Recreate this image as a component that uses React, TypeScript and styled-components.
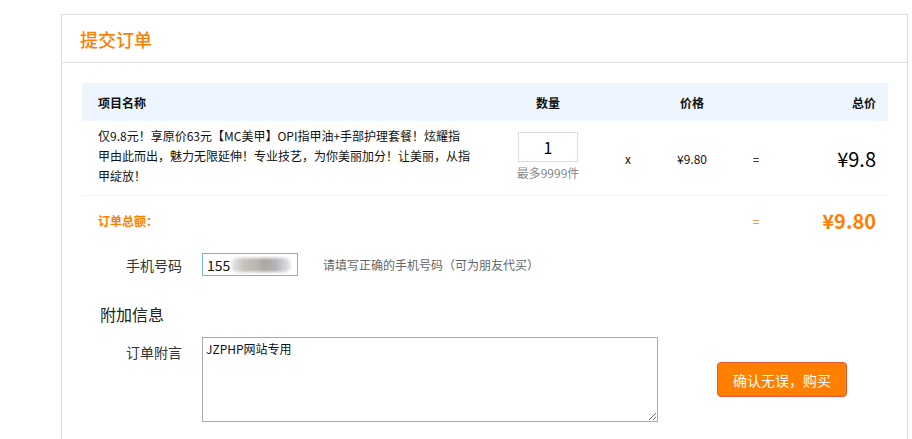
import React from "react";
import styled, { createGlobalStyle } from "styled-components";

const Global = createGlobalStyle`
  html, body { margin: 0; padding: 0; background: #fff; }
  body { font-family: "Microsoft YaHei", "Noto Sans CJK SC", "Noto Sans", sans-serif; color: #333; }
  * { box-sizing: border-box; }
`;

const ORANGE = "#ff7e00";

const Panel = styled.div`
  margin: 14px 0 0 61px;
  width: 847px;
  min-height: 440px;
  border: 1px solid #ddd;
  border-bottom: none;
`;

const PanelHead = styled.div`
  height: 48px;
  display: flex;
  align-items: center;
  padding-left: 18px;
  border-bottom: 1px solid #ddd;
`;

const Title = styled.h2`
  margin: 0;
  font-size: 18px;
  font-weight: 500;
  color: ${ORANGE};
`;

const PanelBody = styled.div`
  padding: 20px 19px 0 20px;
`;

const Row = styled.div<{ $head?: boolean; $h: number; $line?: boolean }>`
  display: grid;
  grid-template-columns: 418px 96px 64px 64px 64px 100px;
  align-items: center;
  height: ${(p) => p.$h}px;
  background: ${(p) => (p.$head ? "#edf6fe" : "transparent")};
  border-bottom: ${(p) => (p.$line ? "1px solid #eef3f9" : "none")};
  font-size: 12px;
`;

const Cell = styled.div<{ $align?: "left" | "center" | "right"; $bold?: boolean; $color?: string; $size?: number }>`
  text-align: ${(p) => p.$align || "center"};
  font-weight: ${(p) => (p.$bold ? 700 : 400)};
  color: ${(p) => p.$color || "#111"};
  font-size: ${(p) => p.$size || 12}px;
  padding: ${(p) => (p.$align === "left" ? "0 0 0 16px" : p.$align === "right" ? "0 12px 0 0" : "0")};
`;

const ProductName = styled.div`
  padding-left: 16px;
  width: 390px;
  font-size: 12px;
  line-height: 20px;
  color: #111;
  margin-top: -4px;
`;

const QtyCell = styled.div`
  display: flex;
  flex-direction: column;
  align-items: center;
  margin-top: -3px;
`;

const QtyInput = styled.input`
  width: 60px;
  height: 30px;
  border: 1px solid #ddd;
  text-align: center;
  font-size: 16px;
  font-family: inherit;
  color: #000;
  padding: 0;
  outline: none;
`;

const QtyNote = styled.div`
  font-size: 12px;
  color: #888;
  margin-top: 3px;
  line-height: 16px;
`;

const FormRow = styled.div<{ $top?: number; $start?: boolean }>`
  display: flex;
  align-items: ${(p) => (p.$start ? "flex-start" : "center")};
  margin-top: ${(p) => p.$top || 0}px;
`;

const Label = styled.label<{ $pad?: number }>`
  width: 100px;
  margin-right: 20px;
  text-align: right;
  font-size: 14px;
  color: #333;
  padding-top: ${(p) => p.$pad || 0}px;
`;

const PhoneBox = styled.div`
  width: 96px;
  height: 23px;
  border: 1px solid #7fb3dd;
  display: flex;
  align-items: center;
  padding-left: 4px;
  font-size: 14px;
  color: #111;
`;

const Blur = styled.span`
  display: inline-block;
  width: 60px;
  height: 14px;
  margin-left: 1px;
  border-radius: 6px;
  background: linear-gradient(90deg, #e6ecf2 0%, #c6c3bc 20%, #bdbab3 40%, #a9a79d 55%, #b6b4b8 75%, #e4e8ee 100%);
  filter: blur(1.5px);
`;

const Hint = styled.span`
  margin-left: 25px;
  font-size: 12px;
  color: #666;
`;

const SectionTitle = styled.div`
  margin: 28px 0 0 18px;
  font-size: 16px;
  color: #222;
  line-height: 20px;
`;

const Textarea = styled.textarea`
  width: 456px;
  height: 85px;
  border: 1px solid #aaa;
  font-family: inherit;
  font-size: 12px;
  color: #111;
  padding: 2px 3px;
  margin: 0;
  outline: none;
`;

const BuyButton = styled.button`
  margin: 25px 0 0 59px;
  width: 130px;
  height: 35px;
  background: #ff7f00;
  border: 1px solid #e4573a;
  border-radius: 4px;
  color: #fff;
  font-size: 14px;
  font-family: inherit;
  cursor: pointer;
`;

export default function App() {
  return (
    <>
      <Global />
      <Panel>
        <PanelHead>
          <Title>提交订单</Title>
        </PanelHead>
        <PanelBody>
          <Row $head $h={38}>
            <Cell $align="left" $bold>项目名称</Cell>
            <Cell $bold>数量</Cell>
            <Cell />
            <Cell $bold>价格</Cell>
            <Cell />
            <Cell $align="right" $bold>总价</Cell>
          </Row>
          <Row $h={75} $line>
            <ProductName>
              仅9.8元！享原价63元【MC美甲】OPI指甲油+手部护理套餐！炫耀指甲由此而出，魅力无限延伸！专业技艺，为你美丽加分！让美丽，从指甲绽放！
            </ProductName>
            <QtyCell>
              <QtyInput defaultValue="1" />
              <QtyNote>最多9999件</QtyNote>
            </QtyCell>
            <Cell>x</Cell>
            <Cell>¥9.80</Cell>
            <Cell>=</Cell>
            <Cell $align="right" $size={20} $color="#000">¥9.8</Cell>
          </Row>
          <Row $h={48}>
            <Cell $align="left" $bold $color={ORANGE}>订单总额：</Cell>
            <Cell />
            <Cell />
            <Cell />
            <Cell $color={ORANGE}>=</Cell>
            <Cell $align="right" $bold $size={20} $color={ORANGE}>¥9.80</Cell>
          </Row>
          <FormRow $top={9}>
            <Label>手机号码</Label>
            <PhoneBox>
              155<Blur />
            </PhoneBox>
            <Hint>请填写正确的手机号码（可为朋友代买）</Hint>
          </FormRow>
          <SectionTitle>附加信息</SectionTitle>
          <FormRow $top={13} $start>
            <Label $pad={5}>订单附言</Label>
            <Textarea defaultValue="JZPHP网站专用" />
            <BuyButton>确认无误，购买</BuyButton>
          </FormRow>
        </PanelBody>
      </Panel>
    </>
  );
}
